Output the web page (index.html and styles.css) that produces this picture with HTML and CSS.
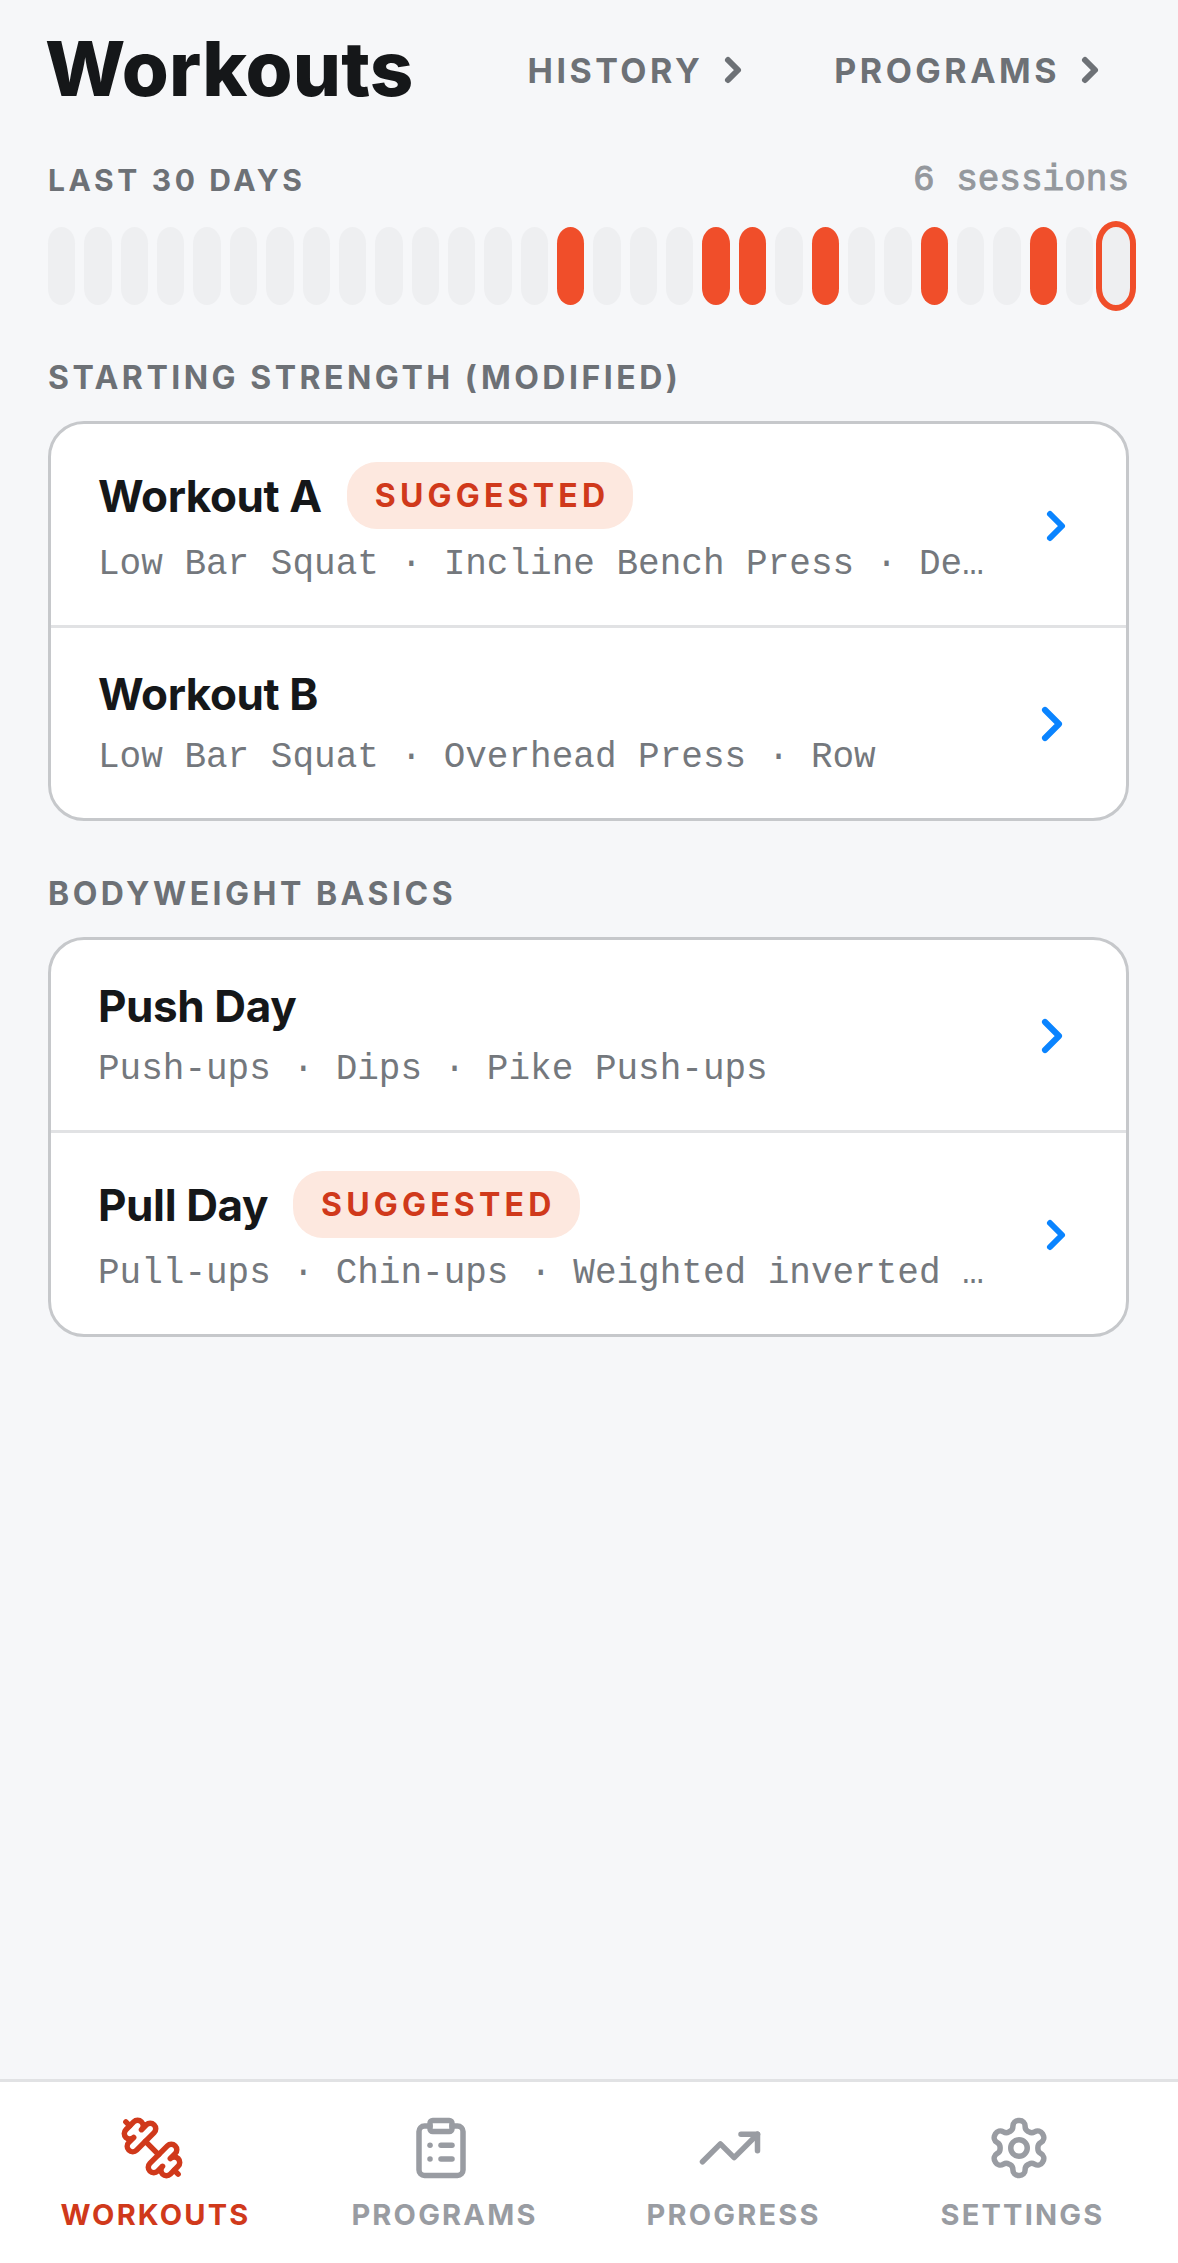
FILE: index.html
```html
<!DOCTYPE html>
<html>
<head>
  <title>Workouts</title>
  <link rel="stylesheet" href="styles.css">
</head>
<body>
  <div class="pantalla">
    <main class="contenido">
      <header class="cabecera">
        <h1 class="titulo">Workouts</h1>
        <nav class="enlaces">
          <a class="enlace enlace-historia">HISTORY
            <svg class="flecha-gris" viewBox="0 0 24 24"><path d="m9 18 6-6-6-6"/></svg>
          </a>
          <a class="enlace">PROGRAMS
            <svg class="flecha-gris" viewBox="0 0 24 24"><path d="m9 18 6-6-6-6"/></svg>
          </a>
        </nav>
      </header>

      <div class="resumen">
        <span class="resumen-titulo">LAST 30 DAYS</span>
        <span class="resumen-sesiones">6 sessions</span>
      </div>

      <div class="barras">
        <div class="barra"></div><div class="barra"></div><div class="barra"></div><div class="barra"></div><div class="barra"></div>
        <div class="barra"></div><div class="barra"></div><div class="barra"></div><div class="barra"></div><div class="barra"></div>
        <div class="barra"></div><div class="barra"></div><div class="barra"></div><div class="barra"></div><div class="barra activa"></div>
        <div class="barra"></div><div class="barra"></div><div class="barra"></div><div class="barra activa"></div><div class="barra activa"></div>
        <div class="barra"></div><div class="barra activa"></div><div class="barra"></div><div class="barra"></div><div class="barra activa"></div>
        <div class="barra"></div><div class="barra"></div><div class="barra activa"></div><div class="barra"></div><div class="barra hoy"></div>
      </div>

      <h2 class="seccion">STARTING STRENGTH (MODIFIED)</h2>
      <section class="tarjeta">
        <div class="fila">
          <div class="fila-texto">
            <div class="fila-cabeza">
              <span class="fila-nombre">Workout A</span>
              <span class="sugerido">SUGGESTED</span>
            </div>
            <div class="fila-detalle">Low Bar Squat · Incline Bench Press · De…</div>
          </div>
          <svg class="flecha flecha-chica" viewBox="0 0 24 24"><path d="m9 18 6-6-6-6"/></svg>
        </div>
        <div class="fila">
          <div class="fila-texto">
            <div class="fila-cabeza">
              <span class="fila-nombre">Workout B</span>
            </div>
            <div class="fila-detalle">Low Bar Squat · Overhead Press · Row</div>
          </div>
          <svg class="flecha" viewBox="0 0 24 24"><path d="m9 18 6-6-6-6"/></svg>
        </div>
      </section>

      <h2 class="seccion">BODYWEIGHT BASICS</h2>
      <section class="tarjeta">
        <div class="fila">
          <div class="fila-texto">
            <div class="fila-cabeza">
              <span class="fila-nombre">Push Day</span>
            </div>
            <div class="fila-detalle">Push-ups · Dips · Pike Push-ups</div>
          </div>
          <svg class="flecha" viewBox="0 0 24 24"><path d="m9 18 6-6-6-6"/></svg>
        </div>
        <div class="fila">
          <div class="fila-texto">
            <div class="fila-cabeza">
              <span class="fila-nombre">Pull Day</span>
              <span class="sugerido">SUGGESTED</span>
            </div>
            <div class="fila-detalle">Pull-ups · Chin-ups · Weighted inverted …</div>
          </div>
          <svg class="flecha flecha-chica" viewBox="0 0 24 24"><path d="m9 18 6-6-6-6"/></svg>
        </div>
      </section>
    </main>

    <nav class="pestanas">
      <a class="pestana actual">
        <svg class="icono" viewBox="0 0 24 24">
          <path d="M14.4 14.4 9.6 9.6"/>
          <path d="M18.657 21.485a2 2 0 1 1-2.829-2.828l-1.767 1.768a2 2 0 1 1-2.829-2.829l6.364-6.364a2 2 0 1 1 2.829 2.829l-1.768 1.767a2 2 0 1 1 2.828 2.829z"/>
          <path d="m21.5 21.5-1.4-1.4"/>
          <path d="M3.9 3.9 2.5 2.5"/>
          <path d="M6.404 12.768a2 2 0 1 1-2.829-2.829l1.768-1.767a2 2 0 1 1-2.828-2.829l2.828-2.828a2 2 0 1 1 2.829 2.828l1.767-1.768a2 2 0 1 1 2.829 2.829z"/>
        </svg>
        <span>WORKOUTS</span>
      </a>
      <a class="pestana">
        <svg class="icono" viewBox="0 0 24 24">
          <rect x="8" y="2" width="8" height="4" rx="1"/>
          <path d="M16 4h2a2 2 0 0 1 2 2v14a2 2 0 0 1-2 2H6a2 2 0 0 1-2-2V6a2 2 0 0 1 2-2h2"/>
          <path d="M12 11h4"/>
          <path d="M12 16h4"/>
          <path d="M8 11h.01"/>
          <path d="M8 16h.01"/>
        </svg>
        <span>PROGRAMS</span>
      </a>
      <a class="pestana">
        <svg class="icono" viewBox="0 0 24 24">
          <polyline points="22 7 13.5 15.5 8.5 10.5 2 17"/>
          <polyline points="16 7 22 7 22 13"/>
        </svg>
        <span>PROGRESS</span>
      </a>
      <a class="pestana">
        <svg class="icono" viewBox="0 0 24 24">
          <path d="M12.22 2h-.44a2 2 0 0 0-2 2v.18a2 2 0 0 1-1 1.73l-.43.25a2 2 0 0 1-2 0l-.15-.08a2 2 0 0 0-2.73.73l-.22.38a2 2 0 0 0 .73 2.73l.15.1a2 2 0 0 1 1 1.72v.51a2 2 0 0 1-1 1.74l-.15.09a2 2 0 0 0-.73 2.73l.22.38a2 2 0 0 0 2.73.73l.15-.08a2 2 0 0 1 2 0l.43.25a2 2 0 0 1 1 1.73V20a2 2 0 0 0 2 2h.44a2 2 0 0 0 2-2v-.18a2 2 0 0 1 1-1.73l.43-.25a2 2 0 0 1 2 0l.15.08a2 2 0 0 0 2.73-.73l.22-.39a2 2 0 0 0-.73-2.73l-.15-.08a2 2 0 0 1-1-1.74v-.5a2 2 0 0 1 1-1.74l.15-.09a2 2 0 0 0 .73-2.73l-.22-.38a2 2 0 0 0-2.73-.73l-.15.08a2 2 0 0 1-2 0l-.43-.25a2 2 0 0 1-1-1.73V4a2 2 0 0 0-2-2z"/>
          <circle cx="12" cy="12" r="3"/>
        </svg>
        <span>SETTINGS</span>
      </a>
    </nav>
  </div>
</body>
</html>
```

FILE: styles.css
```css
body {
  margin: 0;
  padding: 0;
  background-color: #F6F7F9;
  font-family: Inter, "Liberation Sans", sans-serif;
  color: #151719;
}

svg {
  fill: none;
  stroke: currentColor;
  stroke-linecap: round;
  stroke-linejoin: round;
}

.pantalla {
  display: flex;
  flex-direction: column;
  height: 2263px;
}

.contenido {
  flex: 1;
  padding: 24px 49px 0 48px;
}

.cabecera {
  display: flex;
  align-items: center;
  justify-content: space-between;
  height: 88px;
}

.titulo {
  margin: 0 0 0 -3px;
  font-size: 76px;
  font-weight: 800;
  line-height: 88px;
  letter-spacing: 0.1px;
}

.enlaces {
  display: flex;
  align-items: center;
  margin: 4px 19px 0 0;
}

.enlace {
  display: flex;
  align-items: center;
  gap: 10px;
  font-size: 34px;
  font-weight: 700;
  letter-spacing: 3.5px;
  color: #6D7176;
}

.enlace-historia {
  margin-right: 81px;
}

.flecha-gris {
  width: 40px;
  height: 40px;
  stroke-width: 3.6;
}

.resumen {
  display: flex;
  align-items: center;
  justify-content: space-between;
  height: 40px;
  margin-top: 48px;
}

.resumen-titulo {
  font-size: 30px;
  font-weight: 700;
  letter-spacing: 3.6px;
  color: #6D7176;
}

.resumen-sesiones {
  font-family: "Liberation Mono", monospace;
  font-size: 36px;
  color: #94989D;
  -webkit-text-stroke: 1px #94989D;
}

.barras {
  display: flex;
  gap: 9px;
  margin: 27px -1px 1px 0;
}

.barra {
  flex: 1;
  height: 78px;
  border-radius: 14px / 17px;
  background-color: #EEEFF1;
}

.activa {
  background-color: #F04E2A;
}

.hoy {
  outline: 6px solid #F04E2A;
}

.seccion {
  margin: 53px 0 23px;
  font-size: 32px;
  font-weight: 700;
  line-height: 40px;
  letter-spacing: 3.5px;
  color: #6D7176;
}

.tarjeta {
  border: 3px solid #C6C8CB;
  border-radius: 36px;
  background-color: white;
}

.fila {
  display: flex;
  align-items: center;
  gap: 40px;
  padding: 38px 46px 36px 47px;
}

.fila + .fila {
  border-top: 3px solid #E1E2E4;
}

.fila-texto {
  flex: 1;
  min-width: 0;
}

.fila-cabeza {
  display: flex;
  align-items: center;
  gap: 25px;
}

.fila-nombre {
  font-size: 44px;
  font-weight: 700;
  line-height: 56px;
  letter-spacing: -0.4px;
}

.sugerido {
  padding: 0 24px 0 28px;
  border-radius: 30px;
  background-color: #FDE8DF;
  color: #D0391B;
  font-size: 32px;
  font-weight: 700;
  line-height: 67px;
  letter-spacing: 4.2px;
}

.fila-detalle {
  margin-top: 12px;
  font-family: "Liberation Mono", monospace;
  font-size: 36px;
  line-height: 48px;
  white-space: nowrap;
  color: #74787D;
}

.flecha {
  flex: none;
  width: 56px;
  height: 56px;
  stroke-width: 2.6;
  color: #0A84FF;
}

.flecha-chica {
  width: 48px;
  height: 48px;
  stroke-width: 3;
}

.pestanas {
  display: flex;
  height: 181px;
  padding: 0 11px;
  border-top: 3px solid #E1E2E4;
  background-color: white;
}

.pestana {
  display: flex;
  flex: 1;
  flex-direction: column;
  align-items: center;
  padding-top: 33px;
  font-size: 29px;
  font-weight: 700;
  letter-spacing: 2.2px;
  color: #999CA2;
}

.pestana span {
  margin-top: 17px;
  line-height: 34px;
}

.actual {
  color: #D0391B;
}

.icono {
  width: 66px;
  height: 66px;
  margin-right: 8px;
  stroke-width: 2;
}
```
